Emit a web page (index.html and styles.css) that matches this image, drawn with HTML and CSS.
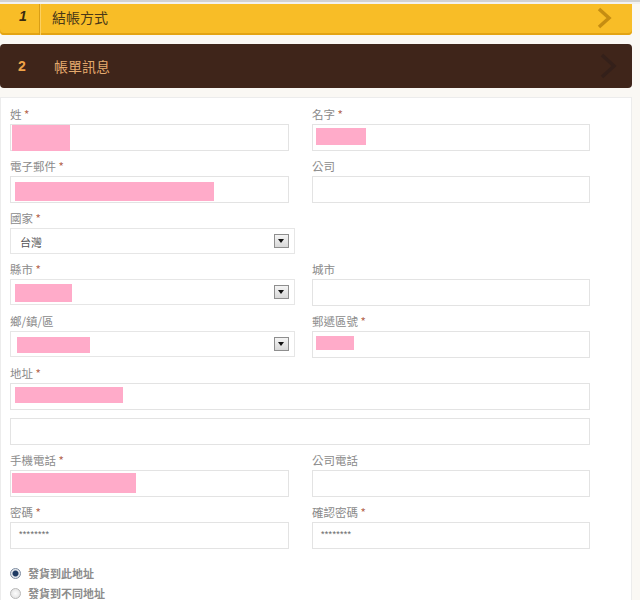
FILE: index.html
```html
<!DOCTYPE html>
<html>

<head>
  <meta charset="utf-8">
  <title>結帳</title>
  <link rel="stylesheet" href="styles.css">
</head>

<body>
  <div class="topline"></div>

  <div class="step step-done">
    <span class="step-num">1</span>
    <span class="step-title">結帳方式</span>
    <svg class="chevron" width="18" height="22" viewBox="0 0 18 22">
      <path d="M4 2 L14 11 L4 20" fill="none" stroke="#c58d12" stroke-width="3.5"/>
    </svg>
  </div>

  <div class="step step-active">
    <span class="step-num">2</span>
    <span class="step-title">帳單訊息</span>
    <svg class="chevron" width="20" height="26" viewBox="0 0 20 26">
      <path d="M4 2 L16 13 L4 24" fill="none" stroke="#34201a" stroke-width="3.5"/>
    </svg>
  </div>

  <div class="panel">
    <form class="billing">
      <div class="field">
        <label>姓 <em>*</em></label>
        <div class="box"><span class="mask" style="width:58px;height:26px;margin:0 0 0 1px"></span></div>
      </div>
      <div class="field">
        <label>名字 <em>*</em></label>
        <div class="box"><span class="mask" style="width:50px;height:17px;margin:3px 0 0 3px"></span></div>
      </div>

      <div class="field">
        <label>電子郵件 <em>*</em></label>
        <div class="box"><span class="mask" style="width:199px;height:19px;margin:5px 0 0 4px"></span></div>
      </div>
      <div class="field">
        <label>公司</label>
        <div class="box"></div>
      </div>

      <div class="field">
        <label>國家 <em>*</em></label>
        <div class="box select"><span class="value">台灣</span><span class="arrow"></span></div>
      </div>
      <div class="field"></div>

      <div class="field">
        <label>縣市 <em>*</em></label>
        <div class="box select"><span class="mask" style="width:57px;height:18px;margin:4px 0 0 4px"></span><span class="arrow"></span></div>
      </div>
      <div class="field">
        <label>城市</label>
        <div class="box"></div>
      </div>

      <div class="field">
        <label>鄉/鎮/區</label>
        <div class="box select"><span class="mask" style="width:73px;height:16px;margin:5px 0 0 6px"></span><span class="arrow"></span></div>
      </div>
      <div class="field">
        <label>郵遞區號 <em>*</em></label>
        <div class="box"><span class="mask" style="width:38px;height:14px;margin:4px 0 0 3px"></span></div>
      </div>

      <div class="field wide">
        <label>地址 <em>*</em></label>
        <div class="box"><span class="mask" style="width:108px;height:16px;margin:3px 0 0 4px"></span></div>
        <div class="box second"></div>
      </div>

      <div class="field">
        <label>手機電話 <em>*</em></label>
        <div class="box"><span class="mask" style="width:124px;height:20px;margin:2px 0 0 1px"></span></div>
      </div>
      <div class="field">
        <label>公司電話</label>
        <div class="box"></div>
      </div>

      <div class="field">
        <label>密碼 <em>*</em></label>
        <div class="box"><span class="dots">********</span></div>
      </div>
      <div class="field">
        <label>確認密碼 <em>*</em></label>
        <div class="box"><span class="dots">********</span></div>
      </div>
    </form>

    <div class="ship">
      <div class="radio-row"><span class="radio checked"></span>發貨到此地址</div>
      <div class="radio-row"><span class="radio"></span>發貨到不同地址</div>
    </div>
  </div>
</body>

</html>
```

FILE: styles.css
```css
body {
margin: 0;
background-color: #faf8f4;
font-family: "Noto Sans CJK TC", "Liberation Sans", sans-serif;
}

.topline {
height: 2px;
background-color: #d2d2d2;
border-bottom: 2px solid #f2f2f2;
}

.step {
position: relative;
display: flex;
align-items: center;
width: 632px;
box-sizing: border-box;
}

.step-done {
align-items: stretch;
height: 31px;
background-color: #f8bd27;
border-radius: 0 0 4px 4px;
box-shadow: inset 0 -2px 0 #e3a414;
}

.step-done .step-num {
width: 40px;
box-sizing: border-box;
padding: 4px 0 0 19px;
font-family: "Liberation Sans", sans-serif;
font-weight: bold;
font-style: italic;
font-size: 14px;
color: #3a2a10;
border-right: 1px solid #d99e16;
box-shadow: 1px 0 0 #fbd061;
}

.step-done .step-title {
margin-left: 12px;
padding-top: 3px;
font-size: 14px;
color: #4a3818;
}

.step-active {
height: 44px;
margin-top: 9px;
background-color: #3f251a;
border-radius: 4px;
}

.step-active .step-num {
width: 54px;
box-sizing: border-box;
padding-left: 18px;
font-family: "Liberation Sans", sans-serif;
font-weight: bold;
font-size: 14px;
color: #f0a348;
}

.step-active .step-title {
font-size: 14px;
color: #e4aa6e;
}

.chevron {
position: absolute;
right: 19px;
top: 3px;
}

.step-active .chevron {
right: 14px;
top: 50%;
transform: translateY(-50%);
}

.panel {
width: 632px;
box-sizing: border-box;
margin-top: 9px;
background-color: #fff;
border: 1px solid #ececec;
border-bottom: none;
padding: 8px 0 20px 9px;
}

.billing {
display: grid;
grid-template-columns: 279px 278px;
column-gap: 23px;
}

.field {
margin-bottom: 7px;
}

.field.wide {
grid-column: 1 / 3;
}

.field label {
display: block;
height: 16px;
line-height: 16px;
margin-bottom: 2px;
font-size: 11.5px;
color: #8a8a8a;
}

.field label em {
font-style: normal;
color: #b5654c;
}

.box {
display: flex;
align-items: flex-start;
height: 27px;
box-sizing: border-box;
border: 1px solid #e3e3e3;
background-color: #fff;
}

.box.second {
margin-top: 8px;
}

.box.select {
position: relative;
width: 285px;
height: 26px;
border-color: #e6e6e6;
}

.select .value {
margin: 5px 0 0 9px;
font-size: 11px;
color: #555;
}

.arrow {
position: absolute;
right: 5px;
top: 5px;
width: 13px;
height: 12px;
border: 1px solid #8e8e8e;
background: linear-gradient(#f4f4f4, #d8d8d8);
}

.arrow::after {
content: "";
position: absolute;
left: 3px;
top: 4px;
border-left: 3.5px solid transparent;
border-right: 3.5px solid transparent;
border-top: 4px solid #111;
}

.mask {
display: block;
background-color: #ffabc9;
}

.dots {
margin: 6px 0 0 8px;
font-family: "Liberation Sans", sans-serif;
font-size: 9px;
letter-spacing: 0.3px;
color: #666;
}

.ship {
margin-top: 7px;
}

.radio-row {
display: flex;
align-items: center;
height: 20px;
font-size: 11px;
font-weight: bold;
color: #8c8c8c;
}

.radio {
width: 9px;
height: 9px;
margin-right: 7px;
border-radius: 50%;
border: 1px solid #b8b8b8;
background: radial-gradient(#fdfdfd, #dcdcdc);
}

.radio.checked {
border-color: #7c8ba0;
background: radial-gradient(circle, #1d3a63 0, #1d3a63 2.5px, #e2e6ec 3.5px);
}
```
